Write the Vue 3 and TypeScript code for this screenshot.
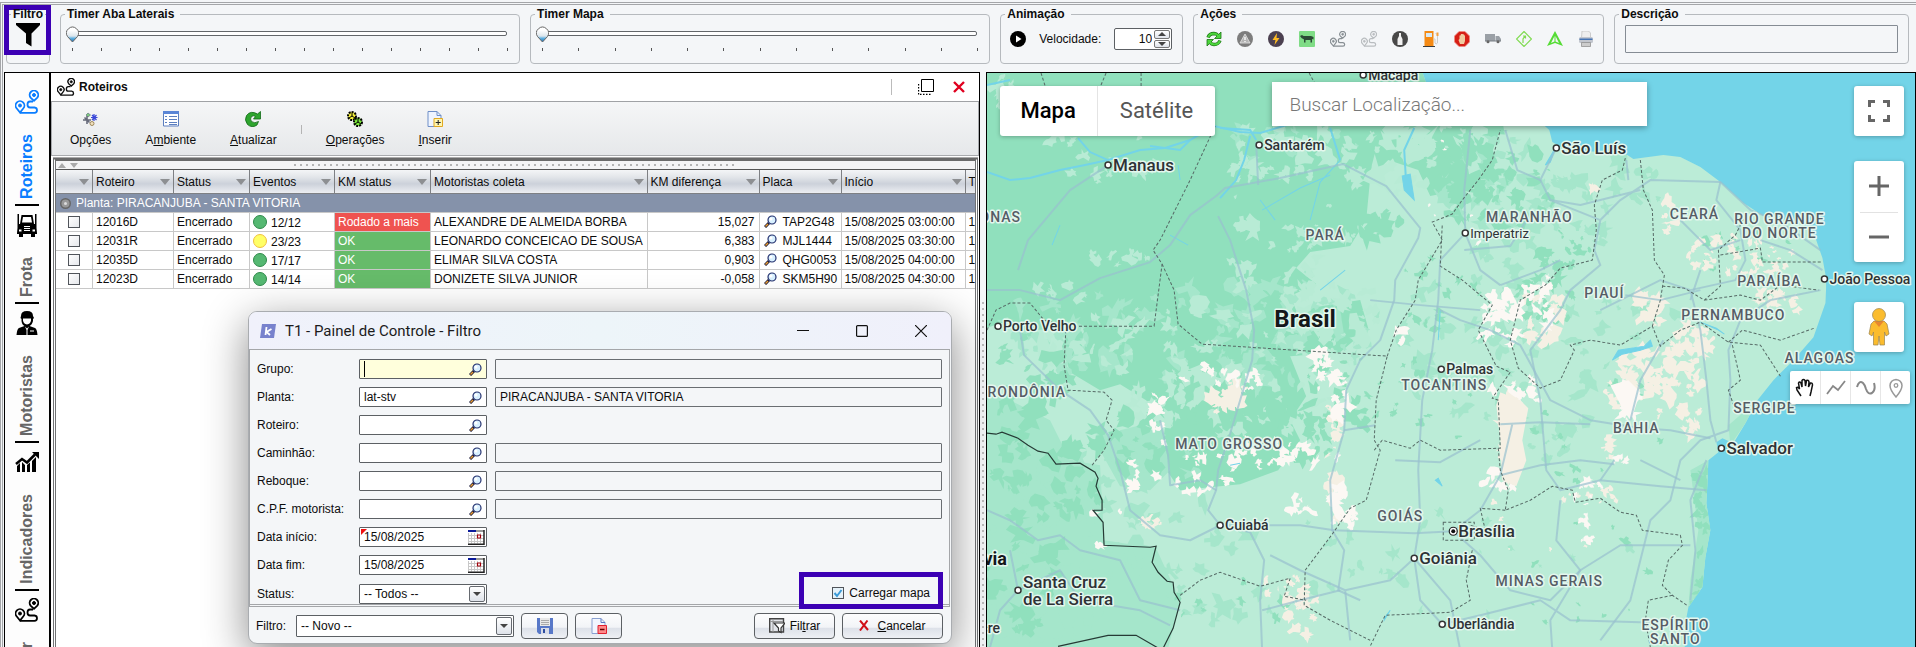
<script setup lang="ts">
import { ref } from 'vue'

interface Row { roteiro: string; eventos: string; cor: string; km: string; ok: boolean; motorista: string; dif: string; placa: string; inicio: string }
interface Column { label: string; cls: string; sort: boolean }
interface Field { id: string; label: string; value: string; extra: string | null }
interface City { x: number; y: number; name: string; size: string; dy: number }
interface Label { x: number; y: number; name: string; cls: string }
type Zone = [number, number, number, number, number, number]

const timers = [
  { id: 'aba', label: 'Timer Aba Laterais', ticks: 16 },
  { id: 'mapa', label: 'Timer Mapa', ticks: 13 },
]
const timerValues = ref<number[]>([0, 0])
const velocidade = ref(10)
const carregarMapa = ref(true)

const columns: Column[] = [
  { label: '', cls: 'c-sel', sort: true },
  { label: 'Roteiro', cls: 'c-rot', sort: true },
  { label: 'Status', cls: 'c-sta', sort: true },
  { label: 'Eventos', cls: 'c-eve', sort: true },
  { label: 'KM status', cls: 'c-km', sort: true },
  { label: 'Motoristas coleta', cls: 'c-mot', sort: true },
  { label: 'KM diferença', cls: 'c-dif', sort: true },
  { label: 'Placa', cls: 'c-pla', sort: true },
  { label: 'Início', cls: 'c-ini', sort: true },
  { label: 'T', cls: 'c-end', sort: false },
]
const rows: Row[] = [
  { roteiro: '12016D', eventos: '12/12', cor: 'green', km: 'Rodado a mais', ok: false, motorista: 'ALEXANDRE DE ALMEIDA BORBA', dif: '15,027', placa: 'TAP2G48', inicio: '15/08/2025 03:00:00' },
  { roteiro: '12031R', eventos: '23/23', cor: 'yellow', km: 'OK', ok: true, motorista: 'LEONARDO CONCEICAO DE SOUSA', dif: '6,383', placa: 'MJL1444', inicio: '15/08/2025 03:30:00' },
  { roteiro: '12035D', eventos: '17/17', cor: 'green', km: 'OK', ok: true, motorista: 'ELIMAR SILVA COSTA', dif: '0,903', placa: 'QHG0053', inicio: '15/08/2025 04:00:00' },
  { roteiro: '12023D', eventos: '14/14', cor: 'green', km: 'OK', ok: true, motorista: 'DONIZETE SILVA JUNIOR', dif: '-0,058', placa: 'SKM5H90', inicio: '15/08/2025 04:30:00' },
]
const fields: Field[] = [
  { id: 'grupo', label: 'Grupo:', value: '', extra: '' },
  { id: 'planta', label: 'Planta:', value: 'lat-stv', extra: 'PIRACANJUBA - SANTA VITORIA' },
  { id: 'roteiro', label: 'Roteiro:', value: '', extra: null },
  { id: 'caminhao', label: 'Caminhão:', value: '', extra: '' },
  { id: 'reboque', label: 'Reboque:', value: '', extra: '' },
  { id: 'cpf', label: 'C.P.F. motorista:', value: '', extra: '' },
]
const dates = [
  { id: 'inicio', label: 'Data início:', value: '15/08/2025' },
  { id: 'fim', label: 'Data fim:', value: '15/08/2025' },
]
const tabs = [
  { icon: 'i-route', label: 'Roteiros', active: true },
  { icon: 'i-truck', label: 'Frota', active: false },
  { icon: 'i-driver', label: 'Motoristas', active: false },
  { icon: 'i-chart', label: 'Indicadores', active: false },
  { icon: 'i-route', label: 'r', active: false },
]

const cities: City[] = [
  { x: 1363, y: 75, name: 'Macapá', size: 'md', dy: 5 },
  { x: 1108, y: 165, name: 'Manaus', size: 'lg', dy: 6 },
  { x: 1259, y: 145, name: 'Santarém', size: 'md', dy: 5 },
  { x: 1556, y: 148, name: 'São Luís', size: 'lg', dy: 6 },
  { x: 1465, y: 233, name: 'Imperatriz', size: 'sm', dy: 5 },
  { x: 1824, y: 279, name: 'João Pessoa', size: 'md', dy: 5 },
  { x: 1721, y: 448, name: 'Salvador', size: 'lg', dy: 6 },
  { x: 1453, y: 531, name: 'Brasília', size: 'lg', dy: 6 },
  { x: 1414, y: 558, name: 'Goiânia', size: 'lg', dy: 6 },
  { x: 1442, y: 624, name: 'Uberlândia', size: 'md', dy: 5 },
  { x: 1441, y: 369, name: 'Palmas', size: 'md', dy: 5 },
  { x: 998, y: 326, name: 'Porto Velho', size: 'md', dy: 5 },
  { x: 1220, y: 525, name: 'Cuiabá', size: 'md', dy: 5 },
  { x: 1018, y: 590, name: 'Santa Cruz', size: 'lg', dy: -2 },
]
const labels: Label[] = [
  { x: 1021, y: 222, name: 'AMAZONAS', cls: 'state end' },
  { x: 1325, y: 240, name: 'PARÁ', cls: 'state' },
  { x: 1529, y: 222, name: 'MARANHÃO', cls: 'state' },
  { x: 1694, y: 219, name: 'CEARÁ', cls: 'state' },
  { x: 1779, y: 224, name: 'RIO GRANDE', cls: 'state' },
  { x: 1779, y: 238, name: 'DO NORTE', cls: 'state' },
  { x: 1769, y: 286, name: 'PARAÍBA', cls: 'state' },
  { x: 1604, y: 298, name: 'PIAUÍ', cls: 'state' },
  { x: 1733, y: 320, name: 'PERNAMBUCO', cls: 'state' },
  { x: 1819, y: 363, name: 'ALAGOAS', cls: 'state' },
  { x: 1764, y: 413, name: 'SERGIPE', cls: 'state' },
  { x: 1636, y: 433, name: 'BAHIA', cls: 'state' },
  { x: 1549, y: 586, name: 'MINAS GERAIS', cls: 'state' },
  { x: 1675, y: 630, name: 'ESPÍRITO', cls: 'state' },
  { x: 1675, y: 644, name: 'SANTO', cls: 'state' },
  { x: 1444, y: 390, name: 'TOCANTINS', cls: 'state' },
  { x: 1066, y: 397, name: 'RONDÔNIA', cls: 'state end' },
  { x: 1229, y: 449, name: 'MATO GROSSO', cls: 'state' },
  { x: 1400, y: 521, name: 'GOIÁS', cls: 'state' },
  { x: 1305, y: 327, name: 'Brasil', cls: 'country' },
  { x: 1007, y: 565, name: 'Bolívia', cls: 'country small end' },
  { x: 1023, y: 605, name: 'de La Sierra', cls: 'lg start' },
  { x: 1000, y: 633, name: 'Sucre', cls: 'md end' },
]

/* Vegetation texture: seeded irregular polygons spread over elliptic zones [cx, cy, rx, ry, count, size]. */
function patches(zones: Zone[], seed: number): string {
  let s = seed
  const rnd = () => { s = (s * 16807) % 2147483647; return s / 2147483647 }
  let d = ''
  for (const [cx, cy, rx, ry, n, size] of zones) {
    for (let i = 0; i < n; i++) {
      const a = rnd() * 6.283, q = Math.sqrt(rnd())
      const x = cx + Math.cos(a) * rx * q, y = cy + Math.sin(a) * ry * q
      const k = size * (0.35 + rnd()), w = 0.4 + rnd() * 0.7, t = rnd() * 3.14
      const pts: string[] = []
      for (let j = 0; j < 12; j++) {
        const b = j * 0.5236, r = k * (0.25 + rnd() * 0.9)
        const px = Math.cos(b) * r * w, py = Math.sin(b) * r
        pts.push((x + px * Math.cos(t) - py * Math.sin(t)).toFixed(1) + ' ' + (y + px * Math.sin(t) + py * Math.cos(t)).toFixed(1))
      }
      d += 'M' + pts.join('L') + 'Z'
    }
  }
  return d
}
const midPatches = patches([[1160, 330, 170, 50, 60, 12], [1120, 480, 90, 50, 34, 12], [1060, 560, 80, 90, 44, 15], [1290, 330, 90, 60, 50, 12], [1500, 190, 60, 60, 40, 12], [1600, 200, 60, 50, 24, 9], [1470, 330, 70, 100, 46, 11], [1550, 400, 50, 70, 24, 10], [1230, 560, 130, 60, 26, 12], [1600, 330, 90, 40, 20, 8], [1500, 560, 150, 60, 16, 7], [1320, 140, 90, 40, 20, 9]], 77)
const lightPatches = patches([[1090, 130, 50, 26, 10, 8], [1120, 170, 50, 14, 14, 7], [1290, 150, 60, 30, 24, 9], [1250, 170, 30, 14, 10, 8], [1390, 160, 50, 36, 30, 12], [1245, 250, 14, 40, 12, 9], [1310, 240, 40, 20, 14, 7], [1120, 255, 30, 10, 8, 7], [1180, 340, 150, 34, 50, 10], [1330, 310, 60, 50, 40, 10], [1060, 290, 30, 14, 8, 7], [1240, 400, 110, 40, 60, 9], [1250, 215, 120, 60, 6, 4], [1440, 130, 40, 40, 22, 10], [1000, 90, 20, 16, 10, 9]], 4242)
const darkPatches = patches([[1030, 390, 40, 60, 26, 12], [1050, 480, 60, 40, 30, 11], [1020, 570, 40, 60, 24, 12], [1470, 150, 30, 50, 26, 13], [1500, 190, 60, 50, 44, 9], [1545, 300, 30, 25, 24, 8], [1560, 250, 30, 20, 18, 7], [1380, 230, 24, 18, 8, 13], [1340, 400, 40, 60, 30, 9], [1420, 400, 50, 60, 14, 5], [1150, 440, 60, 30, 22, 10], [1280, 430, 60, 30, 26, 10], [1700, 505, 7, 50, 22, 8], [1700, 595, 8, 16, 14, 7], [1600, 580, 80, 60, 12, 5], [1600, 430, 70, 60, 14, 5], [1740, 260, 60, 30, 12, 5], [1230, 590, 90, 36, 8, 7], [1440, 290, 40, 40, 14, 7]], 991)
const sandPatches = patches([[1230, 400, 20, 22, 16, 9], [1150, 522, 12, 5, 8, 6], [1332, 430, 8, 36, 12, 6], [1335, 500, 8, 26, 10, 7], [1300, 610, 18, 26, 20, 7], [1285, 585, 24, 12, 12, 5], [1510, 440, 11, 44, 30, 8], [1650, 375, 44, 26, 40, 9], [1690, 340, 22, 16, 24, 10], [1650, 310, 16, 16, 12, 10], [1740, 255, 54, 20, 46, 6], [1780, 300, 24, 14, 14, 6], [1690, 400, 10, 40, 22, 8], [1670, 215, 9, 20, 12, 7], [1610, 450, 5, 12, 6, 6], [1540, 310, 30, 30, 16, 8], [1592, 185, 4, 4, 2, 8], [1590, 495, 40, 8, 8, 5], [1540, 525, 60, 40, 6, 4], [1640, 395, 40, 30, 18, 7]], 313)
const whitePatches = patches([[1322, 365, 9, 26, 14, 7], [1340, 395, 8, 28, 14, 8], [1220, 378, 50, 14, 16, 6], [1160, 420, 8, 36, 10, 7], [1132, 480, 5, 24, 8, 8], [1195, 470, 40, 22, 18, 6], [1255, 450, 50, 18, 24, 7], [1310, 455, 30, 10, 12, 7], [1300, 505, 20, 8, 8, 7], [1337, 510, 6, 26, 9, 8], [1350, 520, 8, 12, 6, 7], [1110, 520, 20, 40, 4, 6], [1500, 320, 20, 30, 26, 8], [1520, 390, 30, 16, 12, 8], [1624, 400, 12, 22, 14, 8], [1500, 480, 18, 14, 8, 6], [1540, 300, 16, 30, 12, 8], [1590, 490, 24, 10, 8, 7], [1585, 525, 8, 26, 8, 6], [1400, 330, 5, 14, 3, 7], [1620, 470, 10, 16, 5, 5], [1480, 180, 60, 70, 8, 4]], 2024)
</script>

<template>
  <div class="app">
    <svg class="defs" aria-hidden="true">
      <symbol id="i-mag" viewBox="0 0 13 13">
        <path d="M1 12 L5 8" stroke="#1a1a3a" stroke-width="3" /><path d="M1.500 11.500 L4 9" stroke="#f0a030" stroke-width="1.500" />
        <circle cx="8" cy="5" r="4" fill="#d8f0ff" stroke="#23306e" stroke-width="1.200" /><circle cx="7" cy="4" r="1.500" fill="#fff" />
      </symbol>
      <symbol id="i-route" viewBox="0 0 24 24">
        <g fill="none" stroke="currentColor" stroke-width="1.800">
          <path d="M5 22.500 L1.800 18.500 A4.400 4.400 0 1 1 8.200 18.500 Z" /><circle cx="5" cy="15.500" r="1.500" fill="currentColor" stroke-width="1" />
          <path d="M19 10.800 L15.600 7.600 A4.300 4.300 0 1 1 22.300 7.600 Z" /><circle cx="19" cy="5" r="1.500" fill="currentColor" stroke-width="1" />
          <path d="M5 22.800 H19.500 Q22 22.800 22 20.300 T19.500 17.500 H15 Q12.500 17.500 12.500 14.500 T15 11.500 H18" />
        </g>
      </symbol>
      <symbol id="i-truck" viewBox="0 0 24 24">
        <path fill="currentColor" d="M2.500 1 H4 V11 H5 L6.500 2 H17.500 L19 11 H20 V1 H21.500 V15 L22 20 V21 H20 V24 H16 V21 H8 V24 H4 V21 H2 V20 L2.500 15 Z" />
        <path fill="#fff" d="M8 4 H16 L17 9.500 H7 Z M9 13 H15 V14 H9 Z M9 15 H15 V16 H9 Z M9 17 H15 V18 H9 Z M4 16.500 H6.500 V18.500 H4 Z M17.500 16.500 H20 V18.500 H17.500 Z" />
      </symbol>
      <symbol id="i-driver" viewBox="0 0 24 24">
        <path fill="currentColor" d="M6 5 Q6 0 12 0 Q18 0 18 5 L19 7 L18 8 V10 Q17 14 14.500 15 L20 17 Q22 18 22.500 24 H1.500 Q2 18 4 17 L9.500 15 Q7 14 6.500 10 V8 L5.500 7 Z" />
        <path fill="#fff" d="M8 7.500 H16 V9.500 Q15.500 13 12 13.500 Q8.500 13 8 9.500 Z M10 15.500 L12 17.500 L14 15.500 L12.500 19 V24 H11.500 V19 Z M15 19.500 H19 V20.500 H15 Z" />
      </symbol>
      <symbol id="i-chart" viewBox="0 0 24 24">
        <path fill="currentColor" d="M2 16 L5 13 V22 H2 Z M7 12 L10 15 V22 H7 Z M12 15 L15 12.500 V22 H12 Z M17 11 L21 7 V22 H17 Z" />
        <path d="M1 14 L7 9 L12 12.500 L20 4.500" fill="none" stroke="currentColor" stroke-width="2.500" /><path d="M17 2 H24 V9 Z" fill="currentColor" />
      </symbol>
      <symbol id="i-cal" viewBox="0 0 17 15">
        <path d="M0 0 H16 V14 H0 Z" fill="#fff" /><path d="M.5 3 V13.500 M3.500 3 V13.500 M6.500 3 V13.500 M9.500 3 V13.500 M12.500 3 V13.500 M0 5.500 H16 M0 8.500 H16 M0 11.500 H16" stroke="#c8c8c8" />
        <path d="M0 0 H8 V2 H0 Z" fill="#0a1a9a" /><path d="M8 0 H16 V2 H8 Z" fill="#999" /><path d="M9.500 5 H12.500 V8 H9.500 Z" fill="#fff" stroke="#a0000a" stroke-width="1.200" /><path d="M16 0 V14.300 H0" fill="none" stroke="#222" stroke-width="1.500" />
      </symbol>
    </svg>

    <div class="frame">
      <header class="top">
        <fieldset class="box filtro">
          <legend>Filtro</legend>
          <button class="plain funnel" aria-label="Filtro"><svg width="26" height="24" viewBox="0 0 26 24"><path d="M1 0 H25 V2 L16.500 10.500 V23.500 L11 20 V10.500 L1 2 Z" /></svg></button>
          <span class="mark mark-filter"></span>
        </fieldset>
        <fieldset v-for="(t, i) in timers" :key="t.id" class="box timer">
          <legend>{{ t.label }}</legend>
          <div class="slider">
            <span class="rail"></span>
            <input v-model.number="timerValues[i]" type="range" min="0" :max="t.ticks - 1" :aria-label="t.label">
          </div>
          <div class="ticks"><i v-for="n in t.ticks" :key="n"></i></div>
        </fieldset>
        <fieldset class="box anim">
          <legend>Animação</legend>
          <div class="row">
            <button class="plain" aria-label="Iniciar"><svg width="16" height="16" viewBox="0 0 16 16"><circle cx="8" cy="8" r="8" /><path d="M6 4.500 L11.500 8 L6 11.500 Z" fill="#fff" /></svg></button>
            <label for="vel">Velocidade:</label>
            <span class="spin">
              <input id="vel" v-model="velocidade" type="text">
              <span class="steps">
                <button aria-label="Aumentar" @click="velocidade++"><svg width="8" height="4" viewBox="0 0 8 4"><path d="M0 4 L4 0 L8 4 Z" fill="#444" /></svg></button>
                <button aria-label="Diminuir" @click="velocidade--"><svg width="8" height="4" viewBox="0 0 8 4"><path d="M0 0 L4 4 L8 0 Z" fill="#444" /></svg></button>
              </span>
            </span>
          </div>
        </fieldset>
        <fieldset class="box acoes">
          <legend>Ações</legend>
          <div class="row icons">
            <button class="plain" aria-label="Atualizar"><svg viewBox="0 0 16 16"><g fill="none" stroke="#1c7414" stroke-width="3.400"><path d="M2 6.500 Q3.500 2.500 8 2.500 Q10.500 2.600 12 4.500" /><path d="M14 9.500 Q12.500 13.500 8 13.500 Q5.500 13.400 4 11.500" /></g><path d="M15 1 V7.500 H8.500 Z M1 15 V8.500 H7.500 Z" fill="#4cd53c" stroke="#1c7414" stroke-width=".8" /><g fill="none" stroke="#4cd53c" stroke-width="2"><path d="M2.200 6.200 Q3.500 2.500 8 2.500 Q10.500 2.600 12.500 5" /><path d="M13.800 9.800 Q12.500 13.500 8 13.500 Q5.500 13.400 3.500 11" /></g></svg></button>
            <button class="plain" aria-label="Alertas"><svg viewBox="0 0 16 16"><circle cx="8" cy="8" r="8" fill="#7d7d7d" /><path d="M8 3 L13 12 H3 Z" fill="#b5b5b5" stroke="#e4e4e4" stroke-width=".8" /><path d="M8 6 V9 M8 10 V11" stroke="#fff" stroke-width="1.300" /></svg></button>
            <button class="plain" aria-label="Energia"><svg viewBox="0 0 16 16"><circle cx="8" cy="8" r="8" fill="#4b4050" /><path d="M9 2 L4.500 9 H7.500 L6.500 14 L11.500 7 H8.500 Z" fill="#ffbb22" /></svg></button>
            <button class="plain" aria-label="Produtores"><svg viewBox="0 0 16 16"><rect width="16" height="16" rx="1" fill="#7fdc86" /><path d="M1 5 L3 4 L4.500 5 H12 L14.500 6 V8.500 L13 8 V11.500 H11.500 V9 H6.500 V11.500 H5 V8.500 L2.500 7 Z" fill="#2b4a35" /></svg></button>
            <button class="plain grey" aria-label="Rota"><svg><use href="#i-route" /></svg></button>
            <button class="plain pale" aria-label="Rota prevista"><svg><use href="#i-route" /></svg></button>
            <button class="plain" aria-label="Leite"><svg viewBox="0 0 16 16"><circle cx="8" cy="8" r="8" fill="#484848" /><path d="M7 2 H9 V5 L10.500 8 V14 H5.500 V8 L7 5 Z" fill="#f2f2f2" /></svg></button>
            <button class="plain" aria-label="Combustível"><svg viewBox="0 0 16 16"><path d="M1.500 0 H10.500 V15 H1.500 Z" fill="#f58a14" /><path d="M3 2 H9 V6 H3 Z" fill="#d8eaf5" /><path d="M0 15 H12 V16 H0 Z" fill="#3b3b3b" /><path d="M10.500 8 H12 V12 Q13 14 14.500 12 V4 L12.500 2" fill="none" stroke="#ccc" /><path d="M13.500 1.500 H15.500 V5 H13.500 Z" fill="#f5a040" /></svg></button>
            <button class="plain" aria-label="Parada"><svg viewBox="0 0 16 16"><path d="M5 .5 H11 L15.500 5 V11 L11 15.500 H5 L.5 11 V5 Z" fill="#d61f16" stroke="#f08a80" stroke-width=".8" /><path d="M6 13 L4.500 9 L5.500 8 V4.500 L6.500 4.500 L7 3 L8.500 3 L10 3.500 L11 5 V10 L10 13 Z" fill="#f0cba0" /></svg></button>
            <button class="plain" aria-label="Veículo"><svg viewBox="0 0 16 16"><path d="M0 3 H10 V10 H0 Z M10.500 5 H14 L16 8 V10 H10.500 Z" fill="#9aa0a6" /><path d="M0 9.500 H16 V10.500 H0 Z" fill="#777d83" /><circle cx="3" cy="10.800" r="1.500" fill="#666" /><circle cx="13" cy="10.800" r="1.500" fill="#666" /></svg></button>
            <button class="plain" aria-label="Direção"><svg viewBox="0 0 16 16"><path d="M8 .5 L15.500 8 L8 15.500 L.5 8 Z M7 12 V8 L9 5 M7 5 H9.500 V7.500" fill="none" stroke="#80db52" stroke-width="1.200" /></svg></button>
            <button class="plain" aria-label="Navegação"><svg viewBox="0 0 16 16"><path d="M8 0 L16 15 L8 12 L0 15 Z M7.500 5 L4 12 L7.500 10.500 Z M8.500 5 V10.500 L12 12 Z" fill="#55dc35" fill-rule="evenodd" /></svg></button>
            <button class="plain" aria-label="Imprimir"><svg viewBox="0 0 16 16"><path d="M4 0 H10.500 L12.500 2 V7 H3.500 Z" fill="#eee" stroke="#bbb" stroke-width=".7" /><rect x="1" y="6" width="14" height="6" rx="1.500" fill="#c2c6ce" /><path d="M1.500 7.500 H14.500 V9 H1.500 Z" fill="#4674b4" /><path d="M3.500 11.500 H12.500 V15.500 H3.500 Z" fill="#ccc" stroke="#888" stroke-width=".7" /></svg></button>
          </div>
        </fieldset>
        <fieldset class="box descr">
          <legend id="l-desc">Descrição</legend>
          <input class="desc-in" type="text" readonly aria-labelledby="l-desc">
        </fieldset>
      </header>

      <main class="main">
        <nav class="side">
          <a v-for="(t, i) in tabs" :key="i" href="#" class="tab" :class="{ active: t.active }">
            <svg width="24" height="24" aria-hidden="true"><use :href="'#' + t.icon" /></svg>
            <span>{{ t.label }}</span>
          </a>
        </nav>

        <section class="panel">
          <div class="title">
            <svg width="18" height="18" aria-hidden="true"><use href="#i-route" /></svg>
            <h2>Roteiros</h2>
            <span class="vsep"></span>
            <button class="plain" aria-label="Destacar"><svg width="16" height="16" viewBox="0 0 16 16"><path d="M3.500 .5 H15.500 V12.500 H3.500 Z" fill="#fff" stroke="#000" /><path d="M.5 5 V15.500 H13" fill="none" stroke="#000" stroke-width="1.400" stroke-dasharray="1.500 1.500" /></svg></button>
            <button class="plain close" aria-label="Fechar"><svg width="12" height="12" viewBox="0 0 12 12"><path d="M1 1 L11 11 M11 1 L1 11" stroke="#e0001f" stroke-width="2.400" /></svg></button>
          </div>
          <div class="tools">
            <button class="plain tool"><svg width="16" height="16" viewBox="0 0 16 16"><path d="M5 2 L7.500 4 L5 6 L3 4 Z" fill="#7fc97f" stroke="#567" stroke-width=".6" /><path d="M4 5 V13 M0 9 H8 M1.500 6.500 L6.500 11.500" stroke="#666a7a" stroke-width="1.600" /><path d="M11 3 V10 M8 6.500 H14.500 M9 4 L13.500 9 M13.500 4 L9 9" stroke="#3a48d8" stroke-width="1.200" /><circle cx="9" cy="12.500" r="2" fill="#f0e0c0" stroke="#a08a5a" /></svg><span>Opções</span></button>
            <button class="plain tool"><svg width="16" height="16" viewBox="0 0 16 16"><path d="M.5 .5 H15.500 V15 H.5 Z" fill="#fff" stroke="#5c7fc0" /><path d="M0 0 H16 V3 H0 Z" fill="#5b86d6" /><path d="M2 5.500 H4 M2 8.500 H4 M2 11.500 H4 M6 5.500 H14 M6 8.500 H14 M6 11.500 H14 M6 13.500 H14" stroke="#5c7fc0" /></svg><span>A<u>m</u>biente</span></button>
            <button class="plain tool"><svg width="16" height="16" viewBox="0 0 16 16"><path d="M12.500 3 L15.500 .5 V8 H8.500 L10.500 5.500 Q8.500 4 6.500 5.500 Q4.500 8 6.500 10.500 Q9.500 13 13.500 10.500 L12 14 Q7 17.500 2.500 13.500 Q-1 9 1.500 4.500 Q5.500 -1 12.500 3 Z" fill="#2ea52e" stroke="#126a18" stroke-width=".8" /></svg><span><u>A</u>tualizar</span></button>
            <span class="tsep"></span>
            <button class="plain tool"><svg width="16" height="16" viewBox="0 0 16 16"><circle cx="5" cy="5" r="4" fill="#f4f03a" stroke="#000" stroke-width="2" stroke-dasharray="2 1" /><path d="M5 5 V1.500 M5 5 L8 7 M5 5 L2 7" stroke="#000" /><circle cx="11" cy="11" r="4" fill="#7be83a" stroke="#000" stroke-width="2" stroke-dasharray="2 1" /><path d="M11 11 V7.500 M11 11 L14 13 M11 11 L8 13" stroke="#000" /></svg><span><u>O</u>perações</span></button>
            <button class="plain tool"><svg width="16" height="16" viewBox="0 0 16 16"><path d="M1 .5 H10 L14 4.500 V15.500 H1 Z" fill="#eef4ff" stroke="#6f8fc8" /><path d="M10 .5 V4.500 H14" fill="none" stroke="#6f8fc8" /><path d="M7 7.500 H15.500 V15.500 H7 Z" fill="#fff6b0" stroke="#e0a820" /><path d="M11.200 9 V14 M8.700 11.500 H13.700" stroke="#222" /></svg><span><u>I</u>nserir</span></button>
          </div>
          <div class="grid">
            <div class="grip"><svg width="24" height="5" viewBox="0 0 24 5"><path d="M0 5 L4 0 L8 5 Z M12 0 H20 L16 5 Z" fill="#aaa" /></svg><i></i></div>
            <table>
              <thead>
                <tr>
                  <th v-for="c in columns" :key="c.cls" :class="c.cls"><div><span>{{ c.label }}</span><svg v-if="c.sort" width="10" height="6" viewBox="0 0 10 6"><path d="M0 0 H10 L5 6 Z" fill="#8d8f92" /></svg></div></th>
                </tr>
              </thead>
              <tbody>
                <tr class="group"><td colspan="10"><svg width="11" height="11" viewBox="0 0 11 11"><circle cx="5.500" cy="5.500" r="5.500" fill="#666" /><circle cx="5.500" cy="5.500" r="4" fill="#999" /><circle cx="5.500" cy="5.500" r="1.500" fill="#ddd" /></svg>Planta: PIRACANJUBA - SANTA VITORIA</td></tr>
                <tr v-for="r in rows" :key="r.roteiro">
                  <td class="center"><input type="checkbox" class="cb" :aria-label="r.roteiro"></td>
                  <td>{{ r.roteiro }}</td>
                  <td>Encerrado</td>
                  <td class="ev"><i class="dot" :class="r.cor"></i>{{ r.eventos }}</td>
                  <td class="km" :class="{ ok: r.ok }">{{ r.km }}</td>
                  <td>{{ r.motorista }}</td>
                  <td class="num">{{ r.dif }}</td>
                  <td class="pl"><svg width="13" height="13"><use href="#i-mag" /></svg>{{ r.placa }}</td>
                  <td>{{ r.inicio }}</td>
                  <td>1</td>
                </tr>
              </tbody>
            </table>
          </div>
        </section>

        <div class="split"></div>

        <section class="map">
          <svg class="canvas" viewBox="987 73 928 574" preserveAspectRatio="xMinYMin slice" aria-label="Mapa do Brasil">
            <defs>
              <clipPath id="land"><path d="M980 60 H1418 L1430 95 L1500 112 L1540 122 L1549 130 L1552 142 L1566 150 L1600 152 L1627 155 L1633 159 L1648 157 L1663 155 L1680 157 L1700 167 L1720 182 L1743 203 L1763 216 L1800 222 L1814 235 L1822 258 L1826 280 L1825 303 L1813 337 L1793 360 L1773 380 L1757 400 L1745 423 L1733 443 L1722 438 L1716 442 L1718 452 L1708 460 L1707 483 L1706 503 L1710 530 L1705 557 L1702 587 L1688 607 L1685 623 L1684 660 H980 Z" /></clipPath>
            </defs>
            <rect x="980" y="60" width="940" height="600" fill="#73d4e8" />
            <g clip-path="url(#land)">
              <rect x="980" y="60" width="940" height="600" fill="#bbecd7" />
              <path fill="#90e0bd" d="M980 60 H1480 L1476 120 L1460 190 L1430 196 L1418 170 L1388 160 L1370 178 L1366 220 L1350 246 L1310 252 L1296 268 L1316 284 L1290 296 L1296 310 L1360 300 L1368 328 L1340 352 L1290 356 L1306 396 L1290 420 L1300 440 L1278 470 L1240 484 L1180 490 L1160 460 L1166 420 L1146 400 L1120 384 L1100 390 L1070 372 L1062 346 L1070 328 L1030 330 L1010 320 L980 330 Z" />
              <path fill="#a5e6cb" d="M980 392 L1010 400 L1050 420 L1070 460 L1100 465 L1104 540 L1156 548 L1180 600 L1165 660 H980 Z" />
              <path fill="#a5e6cb" d="M1100 450 L1120 430 L1160 420 L1170 470 L1150 490 L1120 486 Z M1690 470 L1708 460 L1710 530 L1702 587 L1688 607 L1690 580 L1698 530 Z M1757 400 L1793 360 L1745 423 L1730 445 L1728 425 Z" />
              <path :d="midPatches" fill="#a5e6cb" />
              <path :d="lightPatches" fill="#b8ebd5" />
              <path :d="darkPatches" fill="#90e0bd" />
              <path :d="sandPatches" fill="#f5f0e4" />
              <path :d="whitePatches" fill="#fcf8f4" />
              <path fill="#f5f0e4" d="M1496 405 L1500 392 L1520 400 L1528 408 L1522 440 L1526 460 L1516 486 L1502 480 L1500 440 Z" />
              <path fill="#fcf8f4" d="M1610 385 L1628 380 L1640 392 L1634 410 L1630 420 L1622 408 Z" />
            </g>
            <g class="river">
              <path d="M987 172 L1010 180 L1030 178 L1060 170 L1085 165 L1108 160 L1140 150 L1165 148 L1190 140 L1214 126 L1240 132 L1260 133 L1290 124 L1310 118" stroke-width="2" />
              <path d="M1078 138 L1090 152 L1108 160 M1250 136 L1244 160 L1236 180 L1220 198 M1190 140 L1180 150 L1150 146 M1220 128 L1250 130 L1256 140 M1414 128 L1404 150 L1406 185 M1330 128 L1340 160 M987 85 L1010 80" stroke-width="2" />
              <path d="M1188 245 L1170 235 M1262 210 L1300 188 L1330 175 M1340 160 L1320 182 L1310 220 M1052 245 L1060 225 M1180 180 L1178 165 M1260 200 L1275 220 M1440 310 L1438 340 M1345 270 L1320 290" stroke-width="1" />
              <path d="M1402 176 L1410 174 L1414 200 L1404 190 Z M1612 360 L1618 350 L1644 346 L1650 340 L1652 346 L1640 350 L1622 354 Z M1700 322 L1718 330 L1724 334 L1716 328 Z M1384 618 L1390 610 L1384 620 Z M1435 480 L1442 486 L1438 478 Z M1545 165 L1555 148 L1550 162 Z M1230 465 L1240 463 Z" stroke-width="1" fill="#73d4e8" />
            </g>
            <g class="road">
              <path d="M1018 270 L1028 240 L1070 190 L1108 165 M1216 196 L1190 215 L1170 245 L1150 262 L1100 278 L1060 300 L1020 290 L987 290 M1216 196 L1225 188 L1280 178 L1343 164 L1386 186 L1420 228 L1418 238 L1395 280 L1394 300 L1380 340 L1360 360 L1346 390 L1344 430 L1330 480 L1332 530 L1344 550 L1338 590 L1360 600" />
              <path d="M1256 142 L1258 185 M1218 216 L1230 240 L1246 290 L1254 330 L1252 360 L1240 400 L1228 440 L1218 470 L1216 490 L1208 510 L1220 525 L1250 532 L1264 560 L1260 600 L1262 650" />
              <path d="M1020 330 L1024 355 L1060 390 L1090 410 L1108 435 L1120 470 L1130 510 L1160 535 L1190 540 L1220 525 L1300 525 L1334 530 L1414 533 L1453 531 M1160 420 L1168 455 L1170 485 L1200 480 L1216 490" />
              <path d="M1465 233 L1440 260 L1438 300 L1432 350 L1422 400 L1418 470 L1420 520 L1414 558 L1420 600 L1442 624 M1465 233 L1464 190 L1470 130 M1465 233 L1480 270 L1500 285 M1464 250 L1510 246 L1525 222 M1505 130 L1517 170 L1540 180 L1556 148" />
              <path d="M1540 180 L1550 200 L1600 220 L1620 200 L1650 180 L1720 182 L1750 210 L1780 222 L1820 250 M1550 200 L1580 205 L1640 190 M1600 220 L1594 250 L1600 265 L1570 290 L1560 310 L1530 350 L1540 400 L1546 470 L1560 490 L1600 480 L1660 486 L1706 490" />
              <path d="M1720 182 L1716 200 L1740 230 L1745 260 L1735 280 L1690 290 L1660 280 L1640 290 L1600 310 M1690 290 L1700 330 L1706 380 L1710 420 L1716 442 M1820 290 L1770 300 L1740 320 L1728 350 L1730 380 L1728 430 L1700 440 L1680 460 L1670 500 L1650 520 L1630 600 L1600 640 M1663 340 L1640 380 L1630 420" />
              <path d="M1440 310 L1460 320 L1490 330 L1520 345 L1550 400 L1590 420 L1640 428 L1670 430 L1710 438 M1500 424 L1540 422 L1590 424 M1500 475 L1540 465 L1580 460 L1614 464 M1500 475 L1512 424 M1453 531 L1480 510 L1500 475 M1453 531 L1480 555 L1510 590 L1550 600 L1580 570 L1620 545 L1690 545" />
              <path d="M1442 624 L1480 615 L1540 600 L1570 620 L1640 622 L1684 620 M1414 558 L1390 580 L1345 590 L1300 570 L1270 555 M1414 558 L1450 600 L1460 650 M1345 590 L1350 640 M1560 500 L1556 540 L1580 570 L1550 620 L1552 650 M1706 460 L1690 500 L1695 550 L1690 600" />
              <path d="M987 510 L1010 520 L1038 540 L1060 535 L1080 550 L1120 560 L1140 600 L1180 610 M1018 590 L1060 570 L1080 600 L1140 610 L1170 625 M1018 590 L1010 550 M1018 590 L1000 610 L990 647 M1262 610 L1300 600 L1340 590 M1395 460 L1440 462 L1480 440 M1344 430 L1375 425 M1370 300 L1420 305 L1480 310" />
              <path d="M1680 220 L1710 250 L1740 240 M1700 270 L1690 300 M1760 240 L1790 250 L1822 270 M1560 260 L1540 270 L1500 285 M1626 160 L1628 180 M1625 295 L1660 300 L1700 290 M1600 480 L1614 460 M1640 460 L1680 480" />
            </g>
            <g class="state-line">
              <path d="M1215 126 L1190 180 L1160 240 L1153 250 L1162 264 L1154 326 H1066 L1064 365 L1068 390 L1104 392 L1112 400 L1106 420 L1114 430 L1104 450 L1092 465" />
              <path d="M1162 264 L1174 290 L1178 324 L1202 344 L1387 356 L1376 400 L1374 440 L1380 450 L1366 500 L1350 508 L1332 534 L1305 570 L1304 605 L1330 620 L1370 640" />
              <path d="M987 330 L996 310 L1010 303 L1030 303 L1044 320 L1066 326 M1041 73 L1047 92 M1106 73 L1098 92 M1141 73 V90 M1309 73 L1316 86" />
              <path d="M1387 356 L1396 330 L1415 300 L1418 280 L1430 260 L1442 240 L1432 222 L1452 214 L1462 200 L1478 180 L1492 160 L1500 130" />
              <path d="M1374 450 L1382 440 L1410 448 L1420 440 L1440 450 L1500 448 L1498 400 L1492 398 L1510 372 L1496 366 L1478 330 L1492 305 L1462 280 L1440 266 L1442 225" />
              <path d="M1625 158 L1622 170 L1602 180 L1594 205 L1596 230 L1592 260 L1560 268 L1545 285 L1520 300 L1510 340 L1518 368 L1540 388 L1560 380 L1574 350 L1570 345 L1590 340 L1620 345 L1652 326 L1660 346 L1680 330 L1700 322 L1728 342 L1760 345 L1780 376" />
              <path d="M1640 160 L1643 190 L1652 210 L1654 260 L1664 275 L1660 300 L1652 326 M1662 286 L1684 288 L1704 300 L1720 286 L1718 250 L1735 235 L1745 215 M1704 300 L1740 295 L1760 300 L1780 285 L1818 290 M1720 255 L1760 248 L1762 262 L1822 262 M1728 342 L1742 330 L1780 340 L1814 328 M1732 345 L1740 380 L1728 390 L1735 410" />
              <path d="M1498 448 L1500 470 L1508 490 L1505 510 L1530 500 L1552 486 L1572 490 L1575 502 L1600 498 L1620 512 L1636 515 L1642 530 L1680 535 L1682 545 L1668 560 L1662 585 L1672 595 L1688 606" />
              <path d="M1505 510 L1480 508 L1485 530 L1470 525 M1443 522 H1474 V540 H1443 Z M1472 550 L1466 580 L1470 600 L1450 612 L1385 615 L1368 650 M1672 595 L1648 600 L1645 620 L1650 647 M1180 595 L1200 580 L1220 572 L1260 586 L1290 578 L1284 596 L1306 600" />
            </g>
            <path class="nation" d="M987 433 L996 434 L1002 432 L1018 438 L1028 445 L1038 451 L1048 453 L1056 464 L1080 463 L1095 472 L1098 478 L1096 486 L1102 500 V510 H1093 L1103 522 L1104 545 L1150 547 L1156 546 L1152 562 L1158 572 L1167 581 L1173 582 L1174 592 L1180 602 L1173 628 L1162 650 M1058 646 L1108 635 H1136 L1162 650" />
            <g v-for="c in cities" :key="c.name">
              <circle :cx="c.x" :cy="c.y" r="3" fill="#fff" stroke="#333" stroke-width="1.500" />
              <text :x="c.x + 5" :y="c.y + c.dy" :class="c.size">{{ c.name }}</text>
            </g>
            <circle cx="1453" cy="531" r="4" fill="#fff" stroke="#222" stroke-width="1.200" />
            <circle cx="1453" cy="531" r="2" fill="#111" />
            <text v-for="l in labels" :key="l.name" :x="l.x" :y="l.y" :class="l.cls">{{ l.name }}</text>
          </svg>
          <div class="types"><button class="on">Mapa</button><button>Satélite</button></div>
          <input class="search" type="text" placeholder="Buscar Localização..." aria-label="Buscar Localização">
          <button class="ctl full" aria-label="Tela cheia"><svg width="22" height="22" viewBox="0 0 22 22"><path d="M1.500 7 V1.500 H7 M15 1.500 H20.500 V7 M20.500 15 V20.500 H15 M7 20.500 H1.500 V15" fill="none" stroke="#666" stroke-width="3" /></svg></button>
          <div class="ctl zoom">
            <button aria-label="Aumentar zoom"><svg width="22" height="22" viewBox="0 0 22 22"><path d="M11 1 V21 M1 11 H21" stroke="#666" stroke-width="3" /></svg></button>
            <button aria-label="Diminuir zoom"><svg width="22" height="22" viewBox="0 0 22 22"><path d="M1 11 H21" stroke="#666" stroke-width="3" /></svg></button>
          </div>
          <button class="ctl peg" aria-label="Street View"><svg width="22" height="38" viewBox="0 0 22 38"><path d="M6 13 H16 L19 16 L21 26 L18 28 L16.500 24 V37 H12 L11 28 L10 37 H5.500 V24 L4 28 L1 26 L3 16 Z" fill="#fbbc2e" stroke="#9a8450" stroke-width=".7" /><path d="M6 13 H16 L11 19 Z" fill="#e8862e" /><circle cx="11" cy="7" r="6.500" fill="#fbbc2e" stroke="#9a8450" stroke-width=".7" /></svg></button>
          <div class="draw">
            <button aria-label="Mover"><svg width="20" height="20" viewBox="0 0 20 20"><path d="M6 18 L2 12 L1.500 9.500 Q3 8.500 4.500 11 L3.500 5 Q4.500 3 6 5 L7 9 L7 2.500 Q8.500 .5 10 2.500 L10.500 8 L11.500 2.500 Q13.500 1.500 14 4 L13.500 9 L15.500 5 Q17.500 4.500 17.500 7 L16 14 L15 18" fill="#fff" stroke="#111" stroke-width="1.500" /></svg></button>
            <button aria-label="Linha"><svg width="20" height="20" viewBox="0 0 20 20"><path d="M1 16 L7 8 L12 12 L19 3" fill="none" stroke="#888" stroke-width="1.800" /></svg></button>
            <button aria-label="Curva"><svg width="20" height="20" viewBox="0 0 20 20"><path d="M1 9 Q3 2 7 5 Q9 7 10 11 Q12 17 16 15 Q20 12 18 5" fill="none" stroke="#888" stroke-width="2" /></svg></button>
            <button aria-label="Marcador"><svg width="20" height="20" viewBox="0 0 20 20"><path d="M10 19 Q4 12 4 7.500 Q4.500 2 10 1.500 Q15.500 2 16 7.500 Q16 12 10 19 Z" fill="none" stroke="#999" stroke-width="1.500" /><circle cx="10" cy="7.500" r="1.800" fill="none" stroke="#999" stroke-width="1.300" /></svg></button>
          </div>
        </section>
      </main>
    </div>

    <form class="dialog" role="dialog" aria-labelledby="dlg-title" @submit.prevent>
      <div class="dlg-head">
        <svg width="16" height="14" viewBox="0 0 16 14"><path d="M2 0 H16 L14 14 H0 Z" fill="#7882cd" /><path d="M6.500 3 L5.500 11 M11.500 5 L6.500 8 L10 11" fill="none" stroke="#fff" stroke-width="1.800" /></svg>
        <h1 id="dlg-title">T1 - Painel de Controle - Filtro</h1>
        <button type="button" class="plain" aria-label="Minimizar"><svg width="12" height="12" viewBox="0 0 12 12"><path d="M0 5.500 H12" stroke="#111" /></svg></button>
        <button type="button" class="plain" aria-label="Maximizar"><svg width="12" height="12" viewBox="0 0 12 12"><rect x=".6" y=".6" width="10.800" height="10.800" rx="1" fill="none" stroke="#111" stroke-width="1.200" /></svg></button>
        <button type="button" class="plain" aria-label="Fechar janela"><svg width="12" height="12" viewBox="0 0 12 12"><path d="M0 0 L12 12 M12 0 L0 12" stroke="#111" stroke-width="1.200" /></svg></button>
      </div>
      <div class="dlg-body">
        <div v-for="f in fields" :key="f.id" class="line">
          <label :for="f.id">{{ f.label }}</label>
          <span class="in" :class="{ focus: f.id === 'grupo' }"><i v-if="f.id === 'grupo'" class="caret"></i><input :id="f.id" type="text" :value="f.value"><button type="button" class="plain" :aria-label="'Pesquisar ' + f.label"><svg width="13" height="13"><use href="#i-mag" /></svg></button></span>
          <input v-if="f.extra !== null" class="ro" type="text" readonly :value="f.extra" :aria-label="'Descrição ' + f.label">
        </div>
        <div v-for="d in dates" :key="d.id" class="line">
          <label :for="d.id">{{ d.label }}</label>
          <span class="in date" :class="{ req: d.id === 'inicio' }"><input :id="d.id" type="text" :value="d.value"><button type="button" class="plain" :aria-label="'Calendário ' + d.label"><svg width="17" height="15"><use href="#i-cal" /></svg></button></span>
        </div>
        <div class="line last">
          <label for="status">Status:</label>
          <span class="sel"><select id="status"><option>-- Todos --</option></select><i></i></span>
          <div class="load mark"><input id="load" v-model="carregarMapa" type="checkbox" class="cb"><label for="load">Carregar mapa</label></div>
        </div>
      </div>
      <div class="dlg-foot">
        <label for="preset">Filtro:</label>
        <span class="sel wide"><select id="preset"><option>-- Novo --</option></select><i></i></span>
        <button type="button" class="btn sq" aria-label="Salvar"><svg width="16" height="16" viewBox="0 0 16 16"><path d="M0 0 H16 V16 H2 L0 14 Z" fill="#5878c8" /><path d="M3 0 H13 V8 H3 Z" fill="#e8e8e8" /><path d="M4 2.500 H12 M4 4.500 H12 M4 6.500 H12" stroke="#aaa" /><path d="M4 10 H12 V16 H4 Z" fill="#d8dce8" /><path d="M6 11 H8 V15 H6 Z" fill="#2d4ca0" /></svg></button>
        <button type="button" class="btn sq" aria-label="Excluir"><svg width="16" height="16" viewBox="0 0 16 16"><path d="M1 .5 H10 L14 4.500 V15.500 H1 Z" fill="#f2f6ff" stroke="#8aa0d0" /><path d="M10 .5 V4.500 H14" fill="none" stroke="#5a78c0" /><path d="M7 7.500 H15.500 V15.500 H7 Z" fill="#ff8a8a" stroke="#e02030" /><path d="M9 11.500 H13.500" stroke="#600" stroke-width="1.500" /></svg></button>
        <span class="fill"></span>
        <button type="button" class="btn fi"><svg width="16" height="16" viewBox="0 0 16 16"><path d="M.7 .7 H14.500 V14 H.7 Z" fill="#e2e4ea" stroke="#444" stroke-width="1.400" /><path d="M1 3.500 H14 M4 1 V14" stroke="#999" /><path d="M5 5 H16 L12 10 V14.500 L9.500 13 V10 Z" fill="#fff" stroke="#333" stroke-width="1.200" /></svg><span>Fil<u>t</u>rar</span></button>
        <button type="button" class="btn ca"><svg width="10" height="11" viewBox="0 0 10 11"><path d="M1 .5 L9 10 M8.500 .5 L1 10.500" stroke="#d01018" stroke-width="2" /></svg><span><u>C</u>ancelar</span></button>
      </div>
    </form>
  </div>
</template>

<style>
html, body { margin: 0; overflow: hidden; }
</style>

<style scoped>
* { box-sizing: border-box; }
.app { position: relative; height: 100vh; padding-top: 2px; overflow: hidden; background: #f4f6f8; font: 12px/14px "Liberation Sans", Arial, sans-serif; color: #0c0c0c; }
.defs { position: absolute; width: 0; height: 0; }
button, input, select { font: inherit; color: inherit; margin: 0; }
svg { display: block; flex: none; }
h1, h2 { margin: 0; }
.plain { border: 0; padding: 0; background: none; display: block; }
.frame { height: 100%; display: flex; flex-direction: column; border-top: 3px double #a4a6a9; border-left: 3px double #a4a6a9; }

.top { display: flex; gap: 10px; padding: 2px 7px 8px 3px; }
.box { position: relative; min-width: 0; height: 57px; margin: 0; padding: 0; border: 1px solid #b6babe; border-radius: 4px; }
.box legend { margin-left: 4px; padding: 0 6px 0 2px; font-weight: bold; line-height: 14px; }
.filtro { width: 44px; flex: none; }
.filtro legend { position: relative; z-index: 1; padding-right: 2px; }
.funnel { margin: 2px auto 0; }
.mark { border: 5px solid #3c00b4; }
.mark-filter { position: absolute; left: -3px; right: -2px; top: -16px; bottom: 8px; pointer-events: none; }
.timer { flex: 460 1 0; }
.descr { flex: 294 1 0; }
.slider { display: grid; padding: 0 5px; margin-top: 4px; }
.slider > * { grid-area: 1 / 1; }
.rail { height: 5px; margin: 6px 7px 0; border: 1px solid #63666a; border-radius: 2px; background: #fff; }
.slider input { appearance: none; width: 100%; height: 18px; background: none; position: relative; }
.slider input::-webkit-slider-thumb { appearance: none; width: 13px; height: 17px; background: url("data:image/svg+xml,%3Csvg xmlns='http://www.w3.org/2000/svg' width='13' height='17'%3E%3ClinearGradient id='g' x2='0' y2='1'%3E%3Cstop offset='.2' stop-color='%23fff'/%3E%3Cstop offset='.6' stop-color='%23dde6ec'/%3E%3Cstop offset='.75' stop-color='%2360b0e0'/%3E%3Cstop offset='1' stop-color='%232070b0'/%3E%3C/linearGradient%3E%3Cpath d='M6.500 16 L1.500 10.500 A6 6 0 1 1 11.500 10.500 Z' fill='url(%23g)' stroke='%23666'/%3E%3C/svg%3E"); }
.ticks { display: flex; justify-content: space-between; padding: 0 11px; margin-top: 5px; }
.ticks i { width: 1px; height: 3px; background: #555; }
.anim { width: 183px; flex: none; }
.acoes { width: 411px; flex: none; }
.row { display: flex; align-items: center; height: 36px; padding-left: 9px; }
.row label { margin: 0 11px 0 13px; }
.anim .row label { width: 64px; }
.spin { display: flex; width: 58px; height: 22px; border: 1px solid #5c6064; border-radius: 2px; background: #fff; padding: 1px; }
.spin input { width: 36px; border: 0; padding: 0; text-align: right; outline: none; background: none; }
.steps { display: grid; width: 16px; margin-left: auto; gap: 1px; }
.steps button { display: grid; place-items: center; padding: 0; border: 1px solid #777; border-radius: 2px; background: linear-gradient(#fff, #dfe3ea); min-height: 0; }
.icons { gap: 15px; padding-left: 12px; }
.icons svg { width: 16px; height: 16px; }
.grey { color: #888f94; }
.pale { color: #b9bdc0; }
.desc-in { display: block; width: calc(100% - 20px); height: 28px; margin: 4px 10px 0; border: 1px solid #858c94; border-radius: 1px; background: #f4f6f8; outline: none; }

.main { flex: 1; min-height: 0; display: flex; padding-left: 1px; }
.side { flex: none; width: 47px; overflow: hidden; padding-top: 17px; border: 1px solid #000; border-width: 1px 2px 0 1px; background: #fdfdfd; }
.tab { display: flex; flex-direction: column; align-items: center; margin-bottom: 7px; color: #000; text-decoration: none; }
.tab span { writing-mode: vertical-rl; transform: rotate(180deg); margin: 20px 0 5px; font: bold 16px/18px "Liberation Sans", Arial, sans-serif; color: #666; }
.tab::after { content: ""; width: 24px; height: 2px; background: #000; }
.tab.active, .tab.active span { color: #0a7dff; }

.panel { flex: 929 1 0; min-width: 0; display: flex; flex-direction: column; border-top: 1px solid #000; border-right: 1px solid #000; background: #fff; }
.title { display: flex; align-items: center; flex: none; height: 29px; padding: 0 14px 0 6px; border-bottom: 1px solid #a0a2a5; }
.title h2 { font: bold 12px/14px "Liberation Sans", Arial, sans-serif; margin: 0 auto 0 4px; }
.vsep { width: 1px; height: 16px; background: #bbb; margin-right: 26px; }
.close { margin-left: 19px; }
.tools { display: flex; flex: none; height: 54px; padding: 9px 1px 0; border: 1px solid #a8aaad; border-top: 0; background: linear-gradient(#f5f6f7, #e6e8ea); }
.tool { display: flex; flex-direction: column; align-items: center; gap: 6px; height: 40px; padding: 0 17px; }
.tsep { width: 1px; height: 9px; margin: 14px 7px 0; background: #b4b4b4; }
.grid { flex: 1; min-height: 0; margin: 2px 1px 0 2px; border: 3px double #707274; border-top: 3px solid #6a6a6a; border-bottom: 0; overflow: hidden; box-shadow: 0 -1px #aaa; }
.grip { display: flex; align-items: center; height: 9px; padding: 0 2px; background: #f4f4f5; border-bottom: 1px solid #555; }
.grip i { width: 442px; height: 2px; margin: 0 auto 0 212px; background: repeating-linear-gradient(90deg, #b4b4b4 0 2px, #0000 2px 6px); }
table { width: 100%; table-layout: fixed; border-collapse: separate; border-spacing: 0; }
th, td { padding: 0 0 0 3px; border-right: 1px solid #c8c8c8; border-bottom: 1px solid #c8c8c8; text-align: left; font-weight: normal; white-space: nowrap; overflow: hidden; }
th { height: 24px; border-color: #7e8084; background: linear-gradient(#f4f5f7, #e3e6ea 30%, #ccd1da 60%, #eceef2); }
th div { display: flex; align-items: center; justify-content: space-between; padding-right: 3px; }
td { height: 19px; }
th:last-child, td:last-child { border-right: 0; text-overflow: clip; }
.c-sel { width: 37px; } .c-rot { width: 81px; } .c-sta { width: 76px; } .c-eve { width: 85px; } .c-km { width: 96px; }
.c-dif { width: 112px; } .c-pla { width: 82px; } .c-ini { width: 124px; } .c-end { width: 9px; }
.group td { background: #8592aa; color: #fff; padding-left: 4px; }
.group svg, .pl svg { display: inline-block; vertical-align: -2px; margin-right: 5px; }
.pl { padding-left: 4px; }
.pl svg { margin-right: 6px; }
.center { text-align: center; padding: 0; }
.cb { appearance: none; display: inline-block; width: 12px; height: 12px; border: 1px solid #50545a; background: linear-gradient(135deg, #fff, #e6e8ec); vertical-align: middle; }
.center .cb { display: block; margin: 0 auto; }
.cb:checked { background: url("data:image/svg+xml,%3Csvg xmlns='http://www.w3.org/2000/svg' width='10' height='10'%3E%3Cpath d='M1.500 5 L4 8 L8.500 2' fill='none' stroke='%233a9ad8' stroke-width='2'/%3E%3C/svg%3E") center no-repeat, #e4f1f9; }
.dot { display: inline-block; width: 14px; height: 14px; margin: 0 4px 0 0; border: 1px solid #2e8a4a; border-radius: 50%; background: #55b872; vertical-align: -2px; }
.dot.yellow { border-color: #f0c040; background: #ffff66; }
.km { background: #ef5350; color: #fff; }
.km.ok { background: #66bb6a; }
td.num { text-align: right; padding: 0 4px 0 0; }

.split { flex: none; width: 6px; background: linear-gradient(#f4f6f8 230px, #0000 230px), radial-gradient(circle, #bcbcbc 1px, #0000 1px) 0 0 / 6px 6px; }

.map { position: relative; z-index: 2; flex: 930 1 0; min-width: 0; border: 1px solid #000; border-bottom: 0; overflow: hidden; font-family: Roboto, Arial, sans-serif; }
.canvas { width: 100%; height: 100%; }
.river path { fill: none; stroke: #73d4e8; }
.river path:last-child { fill: #73d4e8; }
.road path { fill: none; stroke: #98c0cf; stroke-opacity: .7; stroke-width: 2px; stroke-linejoin: round; }
.state-line path { fill: none; stroke: #566a66; stroke-width: 1px; stroke-dasharray: 3 2; }
.nation { fill: none; stroke: #263a35; stroke-width: 1.200px; }
.canvas text { paint-order: stroke; stroke: #e4f7ee; stroke-width: 3px; stroke-linejoin: round; fill: #2e3236; font-family: Roboto, Arial, sans-serif; font-weight: 500; }
.canvas text.sm { font-size: 13px; font-weight: 400; }
.canvas text.md { font-size: 14px; }
.canvas text.lg { font-size: 17px; }
.canvas text.state { font-size: 14px; letter-spacing: 1px; text-anchor: middle; fill: #565d66; }
.canvas text.country { font-size: 24px; font-weight: 700; text-anchor: middle; fill: #15181a; }
.canvas text.small { font-size: 18px; }
.canvas text.end { text-anchor: end; }
.canvas text.start { text-anchor: start; }
.types { position: absolute; left: 13px; top: 13px; display: flex; height: 50px; background: #fff; border-radius: 3px; box-shadow: 0 1px 4px #0004; }
.types button { border: 0; background: none; padding: 0 21px; font-size: 22px; line-height: 26px; color: #565656; }
.types button + button { padding: 0 22px; }
.types button.on { font-weight: 500; color: #000; border-right: 1px solid #e4e4e4; }
.search { position: absolute; left: 285px; top: 9px; width: 375px; height: 44px; border: 0; padding: 0 18px; background: #fff; box-shadow: 0 2px 6px #0005; font: 300 19px/24px Roboto, Arial, sans-serif; outline: none; }
.search::placeholder { color: #777; opacity: 1; }
.ctl { position: absolute; right: 11px; width: 50px; display: grid; place-items: center; padding: 0; border: 0; border-radius: 3px; background: #fff; box-shadow: 0 1px 4px #0004; }
.full { top: 13px; height: 50px; }
.zoom { top: 88px; height: 101px; grid-template-rows: 1fr 1fr; }
.zoom button { display: grid; place-items: center; width: 38px; height: 100%; border: 0; padding: 0; background: none; }
.zoom button + button { border-top: 1px solid #e2e2e2; }
.peg { top: 229px; height: 50px; }
.draw { position: absolute; right: 5px; top: 298px; display: flex; border-radius: 2px; background: #fff; box-shadow: 0 1px 4px #0004; }
.draw button { width: 30px; height: 33px; display: grid; place-items: center; border: 0; padding: 0; background: none; }
.draw button + button { border-left: 1px solid #e6e6e6; }

.dialog { position: absolute; z-index: 1; left: 248px; top: 311px; width: 704px; border: 1px solid #a9acb0; border-radius: 9px; background: #f4f6f8; box-shadow: 0 12px 44px #0007; overflow: hidden; }
.dlg-head { display: flex; align-items: center; height: 37px; padding: 0 24px 0 11px; background: linear-gradient(90deg, #f0f1fb, #edf5f9 50%, #f0f0fb); }
.dlg-head h1 { margin: 0 auto 0 9px; font: 400 15px/20px Roboto, "Open Sans", sans-serif; color: #1c1c1c; }
.dlg-head button + button { margin-left: 47px; }
.dlg-body { margin: 0 1px 0 0; padding: 9px 7px 0; border: 1px solid #a4a6a9; border-bottom: 3px double #a4a6a9; }
.line { display: flex; align-items: center; height: 20px; margin-bottom: 8px; }
.line > label { width: 102px; flex: none; }
.in, .sel { display: flex; align-items: center; position: relative; width: 128px; height: 20px; flex: none; border: 1px solid #5c6064; border-radius: 1px; background: #fff; }
.in input { flex: 1; min-width: 0; height: 18px; border: 0; padding: 0 0 0 4px; background: none; outline: none; }
.in button { margin-right: 4px; }
.in.date button { margin-right: 1px; }
.focus { background: #ffffdc; }
.caret { width: 1px; height: 16px; margin-left: 4px; background: #000; }
.req::before { content: ""; position: absolute; left: 1px; top: 1px; border: 3px solid #f01010; border-right-color: transparent; border-bottom-color: transparent; }
.ro { flex: 1; min-width: 0; height: 20px; margin-left: 8px; padding: 0 4px; border: 1px solid #6a6e72; border-radius: 1px; background: #f4f6f8; outline: none; }
.line.last { margin: 9px 0 0; position: relative; }
.sel select { appearance: none; width: 100%; height: 100%; padding: 0 20px 0 4px; border: 0; background: none; outline: none; }
.sel i { position: absolute; right: 1px; top: 1px; bottom: 1px; width: 16px; border: 1px solid #666a70; border-radius: 2px; background: linear-gradient(#fff, #dfe3ea); display: grid; place-items: center; pointer-events: none; }
.sel i::after { content: ""; border: 4px solid transparent; border-top-color: #444; border-bottom: 0; }
.load { position: absolute; right: -1px; top: -12px; width: 144px; height: 37px; display: flex; align-items: center; justify-content: flex-end; gap: 5px; padding: 5px 8px 0 0; z-index: 1; }
.dlg-foot { display: flex; align-items: center; height: 36px; padding: 1px 8px 0 7px; }
.dlg-foot label { width: 40px; }
.sel.wide { width: 218px; height: 22px; margin-right: 7px; }
.fill { flex: 1; }
.btn { display: flex; align-items: center; justify-content: center; height: 26px; padding: 0; border: 1px solid #5c6064; border-radius: 4px; background: linear-gradient(#fdfdfe, #f2f4f7 55%, #dde1e9 60%, #eef0f4); }
.sq { width: 47px; margin-right: 7px; }
.fi { width: 81px; gap: 5px; margin-right: 7px; }
.ca { width: 101px; gap: 8px; }
</style>
